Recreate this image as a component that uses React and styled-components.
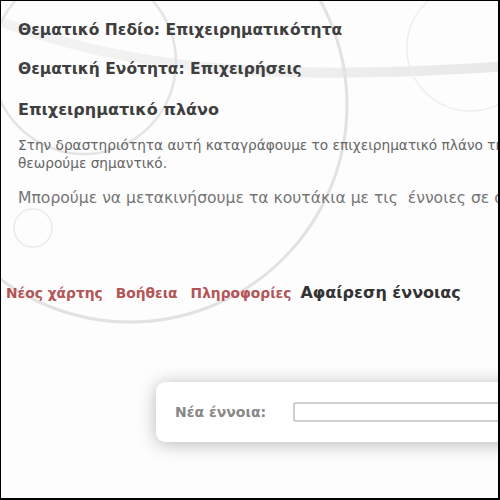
import React from 'react';
import styled, { createGlobalStyle } from 'styled-components';

const GlobalStyle = createGlobalStyle`
html, body {
    margin: 0;
    padding: 0;
    background: #ffffff;
}
`

const Frame = styled.div`
position: relative;
width: 500px;
height: 500px;
box-sizing: border-box;
border-style: solid;
border-color: #000;
border-width: 1px 2px 2px 1px;
background-color: #fdfdfd;
overflow: hidden;
font-family: "DejaVu Sans", Verdana, sans-serif;
`

const Backdrop = styled.svg`
position: absolute;
top: -1px;
left: -1px;
width: 500px;
height: 500px;
z-index: 0;
pointer-events: none;
`

const Content = styled.div`
position: relative;
z-index: 1;
padding: 18px 0 0 17px;
white-space: nowrap;
`

const Heading = styled.h2`
margin: ${p => p.$gap}px 0 0;
font-size: ${p => p.$size}px;
line-height: 22px;
font-weight: bold;
color: #3f3f3f;
`

const Lead = styled.p`
margin: 15px 0 0;
font-size: 13.7px;
line-height: 18px;
color: #666;
`

const Note = styled.p`
margin: 17px 0 0;
font-size: 15.6px;
line-height: 18px;
color: #757575;
`

const Nav = styled.nav`
display: flex;
align-items: baseline;
margin: 76px 0 0 -12px;
font-size: 13.8px;
line-height: 20px;
font-weight: bold;
`

const NavLink = styled.span`
color: ${p => p.$active ? '#333' : '#b35557'};
margin-right: ${p => p.$gap}px;
font-size: ${p => p.$active ? '16px' : 'inherit'};
cursor: pointer;
`

const Panel = styled.div`
display: flex;
align-items: center;
gap: 27px;
width: 420px;
height: 60px;
margin: 79px 0 0 138px;
padding: 0 19px;
box-sizing: border-box;
background: #fff;
border-radius: 9px;
box-shadow: 0 2px 18px rgba(0, 0, 0, 0.28);
`

const Label = styled.label`
font-size: 14px;
font-weight: bold;
color: #888;
`

const Field = styled.input`
width: 260px;
height: 20px;
box-sizing: border-box;
border: 2px solid #cfcfcf;
border-radius: 3px;
background: #fff;
`

function Decorations () {
    return (
        <Backdrop viewBox="0 0 500 500">
            <defs>
                <linearGradient id="band" x1="0" y1="0" x2="1" y2="0">
                    <stop offset="0" stopColor="#f3f3f3" />
                    <stop offset="0.5" stopColor="#f0f0f0" />
                    <stop offset="1" stopColor="#e8e8e8" />
                </linearGradient>
            </defs>
            <path d="M -10 18 C 120 66, 250 84, 510 66" stroke="url(#band)" strokeWidth="10" fill="none" />
            <circle cx="130" cy="105" r="217" stroke="#e2e2e2" strokeWidth="3" fill="none" />
            <circle cx="84" cy="62" r="92" stroke="#e4e4e4" strokeWidth="2.5" fill="none" />
            <circle cx="470" cy="48" r="63" stroke="#eeeeee" strokeWidth="1.5" fill="none" />
            <circle cx="33" cy="228" r="19" stroke="#ebebeb" strokeWidth="1.5" fill="none" />
        </Backdrop>
    )
}

const App = () => (
    <Frame>
        <GlobalStyle />
        <Decorations />
        <Content>
            <Heading $size={15.5} $gap={0}>Θεματικό Πεδίο: Επιχειρηματικότητα</Heading>
            <Heading $size={15.5} $gap={17}>Θεματική Ενότητα: Επιχειρήσεις</Heading>
            <Heading $size={16} $gap={19}>Επιχειρηματικό πλάνο</Heading>
            <Lead>
                Στην δραστηριότητα αυτή καταγράφουμε το επιχειρηματικό πλάνο της επιχείρησης όπως το
                <br />
                θεωρούμε σημαντικό.
            </Lead>
            <Note>Μπορούμε να μετακινήσουμε τα κουτάκια με τις{'\u00a0'} έννοιες σε οποιοδήποτε σημείο της οθόνης.</Note>
            <Nav>
                <NavLink $gap={13}>Νέος χάρτης</NavLink>
                <NavLink $gap={13}>Βοήθεια</NavLink>
                <NavLink $gap={9}>Πληροφορίες</NavLink>
                <NavLink $active $gap={0}>Αφαίρεση έννοιας</NavLink>
            </Nav>
            <Panel>
                <Label htmlFor="concept">Νέα έννοια:</Label>
                <Field id="concept" type="text" />
            </Panel>
        </Content>
    </Frame>
)

export default App
